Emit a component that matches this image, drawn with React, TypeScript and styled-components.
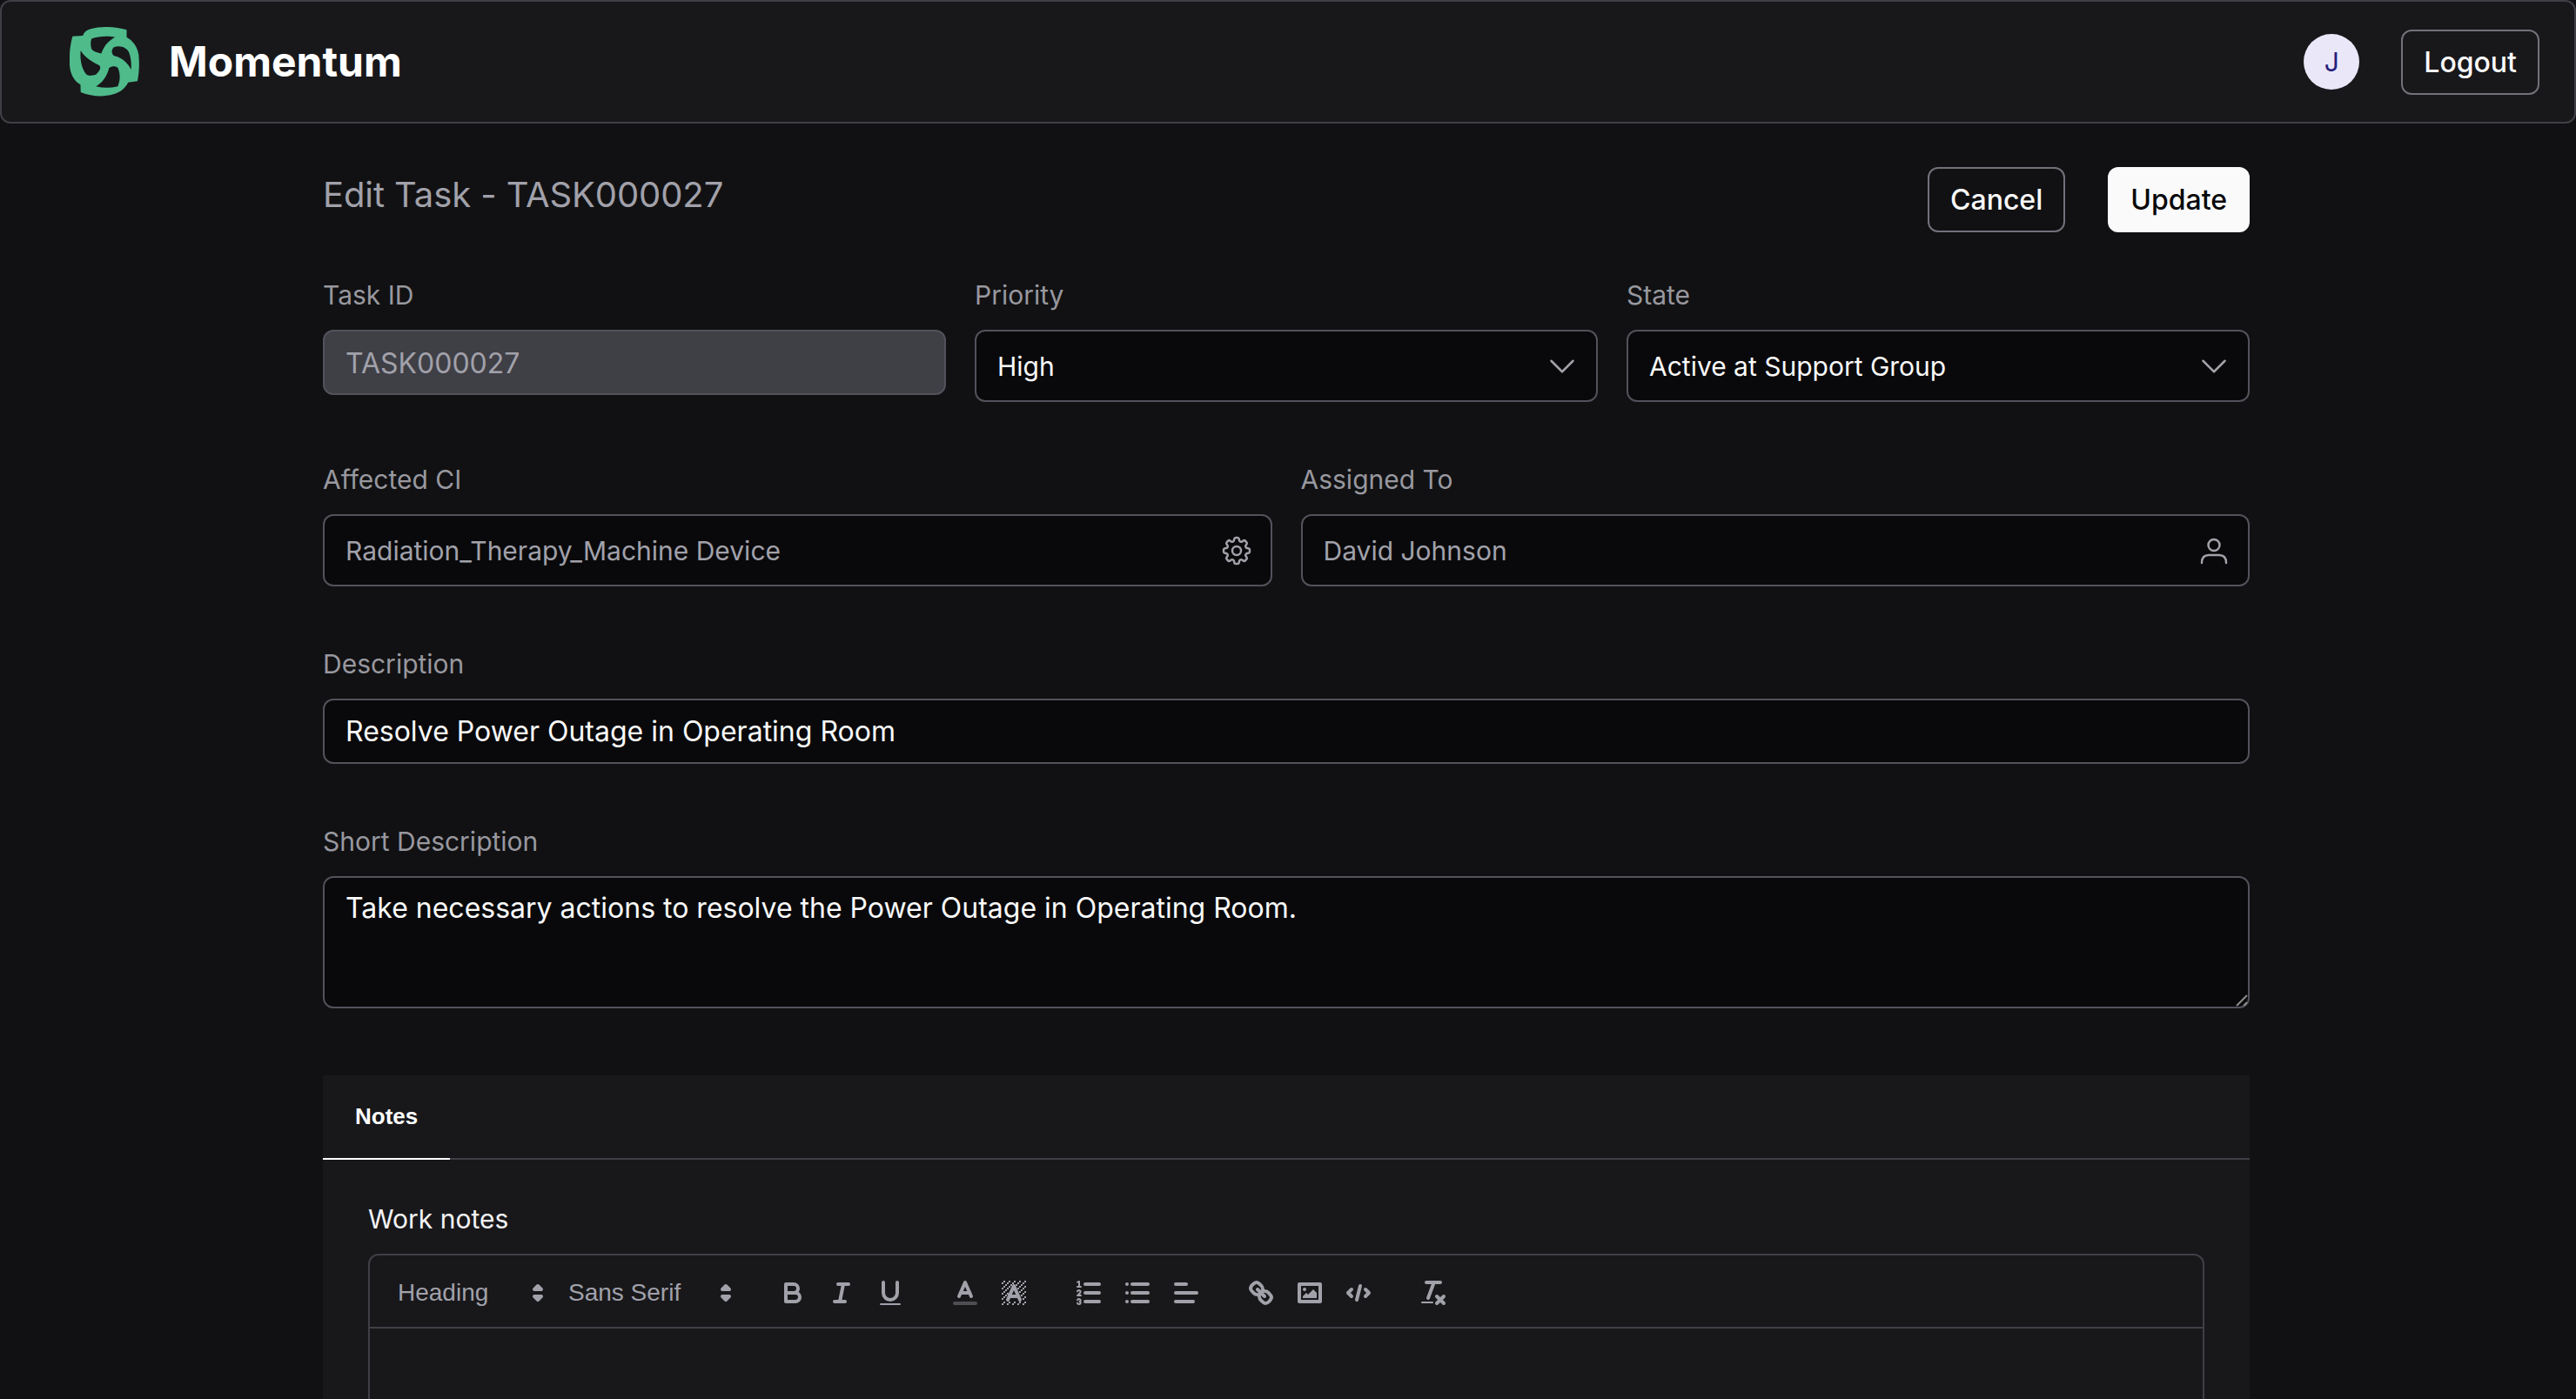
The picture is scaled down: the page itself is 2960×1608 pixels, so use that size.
import React, { FunctionComponent, ReactNode } from 'react';
import styled, { createGlobalStyle } from 'styled-components';
import { HiOutlineChevronDown, HiOutlineCog8Tooth } from 'react-icons/hi2';

const GlobalStyle = createGlobalStyle`
    html, body {
        margin: 0;
        height: 100%;
        background: #111113;
        overflow: hidden;
    }
    * {
        box-sizing: border-box;
    }
    #root {
        height: 1608px;
        overflow: hidden;
        font-family: Inter, "Liberation Sans", sans-serif;
        color: #fafafa;
    }
`

const Header = styled.header`
    display: flex;
    align-items: center;
    justify-content: space-between;
    height: 142px;
    padding: 0 40px 0 78px;
    background: #18181b;
    border: 2px solid #3f3f46;
    border-radius: 12px;
`

const Brand = styled.div`
    display: flex;
    align-items: center;
    gap: 34px;
`

const BrandName = styled.span`
    font-size: 48px;
    line-height: 60px;
    font-weight: 700;
    color: #fff;
`

const HeaderRight = styled.div`
    display: flex;
    align-items: center;
    gap: 48px;
`

const Avatar = styled.div`
    display: flex;
    align-items: center;
    justify-content: center;
    width: 64px;
    height: 64px;
    border-radius: 50%;
    background: #e9e7f8;
    color: #27207a;
    font-size: 30px;
`

const Button = styled.button<{ $primary?: boolean }>`
    height: 75px;
    padding: 0 24px;
    border-radius: 12px;
    border: 2px solid ${p => p.$primary ? '#fafafa' : '#71717a'};
    background: ${p => p.$primary ? '#fafafa' : 'transparent'};
    color: ${p => p.$primary ? '#09090b' : '#fafafa'};
    font-family: inherit;
    font-size: 32px;
    font-weight: 500;
`

const Main = styled.main`
    display: flex;
    flex-flow: column;
    padding: 50px 375px 0 371px;
`

const TitleRow = styled.div`
    display: flex;
    justify-content: space-between;
    height: 75px;
    margin-bottom: 52px;
`

const Title = styled.h1`
    margin: 4px 0 0;
    font-size: 40px;
    line-height: 56px;
    font-weight: 400;
    letter-spacing: -0.1px;
    color: #a1a1aa;
`

const Actions = styled.div`
    display: flex;
    gap: 49px;
`

const Row = styled.div<{ $cols: number }>`
    display: grid;
    grid-template-columns: repeat(${p => p.$cols}, 1fr);
    gap: 33px;
    align-items: start;
    margin-bottom: 69px;
`

const Field = styled.div`
    display: flex;
    flex-flow: column;
    min-width: 0;
`

const Label = styled.label`
    height: 40px;
    margin-bottom: 20px;
    font-size: 30px;
    line-height: 40px;
    color: #98989f;
`

const Control = styled.div<{ $muted?: boolean }>`
    display: flex;
    align-items: center;
    justify-content: space-between;
    height: 83px;
    padding: 1px 19px 0 24px;
    background: #09090b;
    border: 2px solid #52525b;
    border-radius: 12px;
    font-size: 30px;
    color: ${p => p.$muted ? '#a1a1aa' : '#fafafa'};

    svg {
        flex: none;
        color: #a1a1aa;
    }
`

const TextInput = styled.input<{ $disabled?: boolean }>`
    display: block;
    width: 100%;
    height: 75px;
    padding: ${p => p.$disabled ? '1px' : '0'} 24px 0;
    background: ${p => p.$disabled ? '#3f3f46' : '#09090b'};
    border: 2px solid #52525b;
    border-radius: 12px;
    outline: none;
    font-family: inherit;
    font-size: 32px;
    color: ${p => p.$disabled ? '#a1a1aa' : '#fafafa'};
`

const TextAreaWrap = styled.div`
    position: relative;
`

const TextArea = styled.textarea`
    display: block;
    width: 100%;
    height: 152px;
    padding: 15px 24px;
    background: #09090b;
    border: 2px solid #52525b;
    border-radius: 12px;
    outline: none;
    resize: none;
    font-family: inherit;
    font-size: 32px;
    line-height: 40px;
    color: #fafafa;
`

const ResizeGrip = styled.svg`
    position: absolute;
    right: 2px;
    bottom: 2px;
    width: 14px;
    height: 14px;
    stroke: #8e8e8e;
    stroke-width: 2;
`

const Panel = styled.section`
    margin-top: 8px;
    background: #18181b;
`

const TabList = styled.div`
    display: flex;
    height: 97px;
    border-bottom: 2px solid #3f3f46;
`

const Tab = styled.div`
    display: flex;
    align-items: center;
    height: 97px;
    padding: 0 37px;
    border-bottom: 2px solid #fff;
    font-family: "Liberation Sans", sans-serif;
    font-size: 26px;
    font-weight: 700;
    color: #fff;
`

const PanelBody = styled.div`
    padding: 49px 52px 0;
`

const EditorLabel = styled.div`
    height: 40px;
    margin-bottom: 19px;
    font-size: 30px;
    line-height: 39px;
    color: #f4f4f5;
`

const Editor = styled.div`
    border: 2px solid #3f3f46;
    border-radius: 12px;
    height: 400px;
`

const Toolbar = styled.div`
    display: flex;
    align-items: center;
    height: 84px;
    padding: 4px 16px 0;
    border-bottom: 2px solid #3f3f46;
`

const Group = styled.span`
    display: flex;
    margin-right: 30px;
`

const Picker = styled.span<{ $width: number }>`
    display: flex;
    align-items: center;
    justify-content: space-between;
    width: ${p => p.$width}px;
    height: 48px;
    padding: 0 1px 0 16px;
    font-family: "Liberation Sans", sans-serif;
    font-size: 28px;
    font-weight: 500;
    color: #a1a1aa;

    polygon {
        fill: #a1a1aa;
    }
`

const ToolButton = styled.span`
    display: flex;
    align-items: center;
    justify-content: center;
    width: 56px;
    height: 48px;
`

const QuillIcon = styled.svg`
    display: block;
    width: 36px;
    height: 36px;
    fill: none;
    stroke: #a1a1aa;
    stroke-width: 2;
    stroke-linecap: round;
    stroke-linejoin: round;

    .thin {
        stroke-width: 1;
    }
    .fill {
        fill: #a1a1aa;
        stroke: none;
    }
    .label {
        opacity: 0.4;
    }
`

const Logo = () => (
    <svg width="80" height="80" viewBox="90 65 238 238" aria-hidden="true">
        <path
            fill="#4fbb8b"
            fillRule="evenodd"
            d="M100 97 L135 95 C140 82 150 75 162 72 C205 60 250 65 285 75 L285 100 C310 115 322 135 326 160 C329 190 328 220 322 250 L290 255 C280 275 265 288 240 295 C205 305 165 303 128 288 L127 262 C105 250 92 225 90 195 C88 160 92 125 100 97 Z
            M165 105 C190 96 222 95 245 100 C225 112 210 125 198 156 C182 152 170 148 165 140 C161 128 161 115 165 105 Z
            M128 145 C140 168 165 182 192 197 C197 205 196 212 180 228 C165 232 155 233 148 228 C132 210 124 175 128 145 Z
            M240 135 C262 126 285 135 293 152 C300 172 302 192 300 211 C290 190 270 170 245 165 C232 160 232 145 240 135 Z
            M255 205 C265 228 262 250 255 268 C230 274 205 274 180 268 C200 258 218 235 225 205 C235 198 248 198 255 205 Z"
        />
    </svg>
)

const PersonIcon = () => (
    <svg width="40" height="40" viewBox="0 0 40 40" fill="none" stroke="currentColor" strokeWidth="2.5" strokeLinecap="round" aria-hidden="true">
        <circle cx="20" cy="13.5" r="6.5" />
        <path d="M6 34c0-6 3-9 8-9h12c5 0 8 3 8 9" />
    </svg>
)

const Icon: FunctionComponent<{ children: ReactNode }> = ({ children }) => (
    <ToolButton>
        <QuillIcon viewBox="0 0 18 18">{children}</QuillIcon>
    </ToolButton>
)

// hatch behind the "A" of the background colour button
const hatchCells: [number, number][] = [];
for (let y = 2; y < 16; y++) {
    for (let x = 2; x < 16; x++) {
        const insideLetter = y >= 4 && y <= 13 && Math.abs(x + 0.5 - 9) < (y - 4) * 0.45 + 1.2;
        if ((x + y) % 3 === 2 && !insideLetter) {
            hatchCells.push([x, y]);
        }
    }
}

const PickerBox: FunctionComponent<{ width: number; children: ReactNode }> = ({ width, children }) => (
    <Picker $width={width}>
        {children}
        <QuillIcon viewBox="0 0 18 18">
            <polygon points="7 11 9 13 11 11 7 11" />
            <polygon points="7 7 9 5 11 7 7 7" />
        </QuillIcon>
    </Picker>
)

export default function App() {
    return (
        <>
            <GlobalStyle />
            <Header>
                <Brand>
                    <Logo />
                    <BrandName>Momentum</BrandName>
                </Brand>
                <HeaderRight>
                    <Avatar>J</Avatar>
                    <Button>Logout</Button>
                </HeaderRight>
            </Header>
            <Main>
                <TitleRow>
                    <Title>Edit Task - TASK000027</Title>
                    <Actions>
                        <Button>Cancel</Button>
                        <Button $primary>Update</Button>
                    </Actions>
                </TitleRow>
                <Row $cols={3}>
                    <Field>
                        <Label>Task ID</Label>
                        <TextInput $disabled readOnly value="TASK000027" />
                    </Field>
                    <Field>
                        <Label>Priority</Label>
                        <Control>
                            High
                            <HiOutlineChevronDown size={40} />
                        </Control>
                    </Field>
                    <Field>
                        <Label>State</Label>
                        <Control>
                            Active at Support Group
                            <HiOutlineChevronDown size={40} />
                        </Control>
                    </Field>
                </Row>
                <Row $cols={2}>
                    <Field>
                        <Label>Affected CI</Label>
                        <Control $muted>
                            Radiation_Therapy_Machine Device
                            <HiOutlineCog8Tooth size={40} />
                        </Control>
                    </Field>
                    <Field>
                        <Label>Assigned To</Label>
                        <Control $muted>
                            David Johnson
                            <PersonIcon />
                        </Control>
                    </Field>
                </Row>
                <Row $cols={1}>
                    <Field>
                        <Label>Description</Label>
                        <TextInput readOnly value="Resolve Power Outage in Operating Room" />
                    </Field>
                </Row>
                <Row $cols={1}>
                    <Field>
                        <Label>Short Description</Label>
                        <TextAreaWrap>
                            <TextArea readOnly value="Take necessary actions to resolve the Power Outage in Operating Room." />
                            <ResizeGrip viewBox="0 0 14 14">
                                <line x1="1" y1="13" x2="13" y2="1" />
                                <line x1="9" y1="13" x2="13" y2="9" />
                            </ResizeGrip>
                        </TextAreaWrap>
                    </Field>
                </Row>
                <Panel>
                    <TabList>
                        <Tab>Notes</Tab>
                    </TabList>
                    <PanelBody>
                        <EditorLabel>Work notes</EditorLabel>
                        <Editor>
                            <Toolbar>
                                <PickerBox width={196}>Heading</PickerBox>
                                <Group>
                                    <PickerBox width={216}>Sans Serif</PickerBox>
                                </Group>
                                <Group>
                                    <Icon>
                                        <path d="M5,4H9.5A2.5,2.5,0,0,1,12,6.5v0A2.5,2.5,0,0,1,9.5,9H5A0,0,0,0,1,5,9V4A0,0,0,0,1,5,4Z" />
                                        <path d="M5,9h5.5A2.5,2.5,0,0,1,13,11.5v0A2.5,2.5,0,0,1,10.5,14H5a0,0,0,0,1,0,0V9A0,0,0,0,1,5,9Z" />
                                    </Icon>
                                    <Icon>
                                        <line x1="7" x2="13" y1="4" y2="4" />
                                        <line x1="5" x2="11" y1="14" y2="14" />
                                        <line x1="8" x2="10" y1="14" y2="4" />
                                    </Icon>
                                    <Icon>
                                        <path d="M5,3V9a4.012,4.012,0,0,0,4,4H9a4.012,4.012,0,0,0,4-4V3" />
                                        <rect className="fill" height="1" rx="0.5" ry="0.5" width="12" x="3" y="15" />
                                    </Icon>
                                </Group>
                                <Group>
                                    <Icon>
                                        <line className="label" x1="3" x2="15" y1="15" y2="15" />
                                        <polyline points="5.5 11 9 3 12.5 11" />
                                        <line x1="11.63" x2="6.38" y1="9" y2="9" />
                                    </Icon>
                                    <Icon>
                                        {hatchCells.map(([x, y]) => (
                                            <rect key={`${x}-${y}`} className="fill" width="1" height="1" x={x} y={y} />
                                        ))}
                                        <polyline points="5.5 13 9 5 12.5 13" />
                                        <line x1="11.63" x2="6.38" y1="11" y2="11" />
                                    </Icon>
                                </Group>
                                <Group>
                                    <Icon>
                                        <line x1="7" x2="15" y1="4" y2="4" />
                                        <line x1="7" x2="15" y1="9" y2="9" />
                                        <line x1="7" x2="15" y1="14" y2="14" />
                                        <line className="thin" x1="2.5" x2="4.5" y1="5.5" y2="5.5" />
                                        <path className="fill" d="M3.5,6A0.5,0.5,0,0,1,3,5.5V3.085l-0.276.138A0.5,0.5,0,0,1,2.053,3c-0.124-.247-0.023-0.324.224-0.447l1-.5A0.5,0.5,0,0,1,4,2.5v3A0.5,0.5,0,0,1,3.5,6Z" />
                                        <path className="thin" d="M4.5,10.5h-2c0-.234,1.85-1.076,1.85-2.234A0.959,0.959,0,0,0,2.5,8.156" />
                                        <path className="thin" d="M2.5,14.846a0.959,0.959,0,0,0,1.85-.109A0.7,0.7,0,0,0,3.75,14a0.688,0.688,0,0,0,.6-0.736,0.959,0.959,0,0,0-1.85-.109" />
                                    </Icon>
                                    <Icon>
                                        <line x1="6" x2="15" y1="4" y2="4" />
                                        <line x1="6" x2="15" y1="9" y2="9" />
                                        <line x1="6" x2="15" y1="14" y2="14" />
                                        <line x1="3" x2="3" y1="4" y2="4" />
                                        <line x1="3" x2="3" y1="9" y2="9" />
                                        <line x1="3" x2="3" y1="14" y2="14" />
                                    </Icon>
                                    <Icon>
                                        <line x1="3" x2="15" y1="9" y2="9" />
                                        <line x1="3" x2="13" y1="14" y2="14" />
                                        <line x1="3" x2="9" y1="4" y2="4" />
                                    </Icon>
                                </Group>
                                <Group>
                                    <Icon>
                                        <line x1="7" x2="11" y1="7" y2="11" />
                                        <path d="M8.9,4.577a3.476,3.476,0,0,1,.36,4.679A3.476,3.476,0,0,1,4.577,8.9C3.185,7.5,2.035,6.4,4.217,4.217S7.5,3.185,8.9,4.577Z" />
                                        <path d="M13.423,9.1a3.476,3.476,0,0,0-4.679-.36,3.476,3.476,0,0,0,.36,4.679c1.392,1.392,2.5,2.542,4.679.36S14.815,10.5,13.423,9.1Z" />
                                    </Icon>
                                    <Icon>
                                        <rect height="10" width="12" x="3" y="4" />
                                        <circle className="fill" cx="6" cy="7" r="1" />
                                        <polyline className="fill" points="5 12 5 11 7 9 8 10 11 7 13 9 13 12 5 12" />
                                    </Icon>
                                    <Icon>
                                        <polyline points="5 7 3 9 5 11" />
                                        <polyline points="13 7 15 9 13 11" />
                                        <line x1="10" x2="8" y1="5" y2="13" />
                                    </Icon>
                                </Group>
                                <Group>
                                    <Icon>
                                        <line x1="5" x2="13" y1="3" y2="3" />
                                        <line x1="6" x2="9.35" y1="12" y2="3" />
                                        <line x1="11" x2="15" y1="11" y2="15" />
                                        <line x1="15" x2="11" y1="11" y2="15" />
                                        <rect className="fill" height="1" rx="0.5" ry="0.5" width="7" x="2" y="14" />
                                    </Icon>
                                </Group>
                            </Toolbar>
                        </Editor>
                    </PanelBody>
                </Panel>
            </Main>
        </>
    )
}
